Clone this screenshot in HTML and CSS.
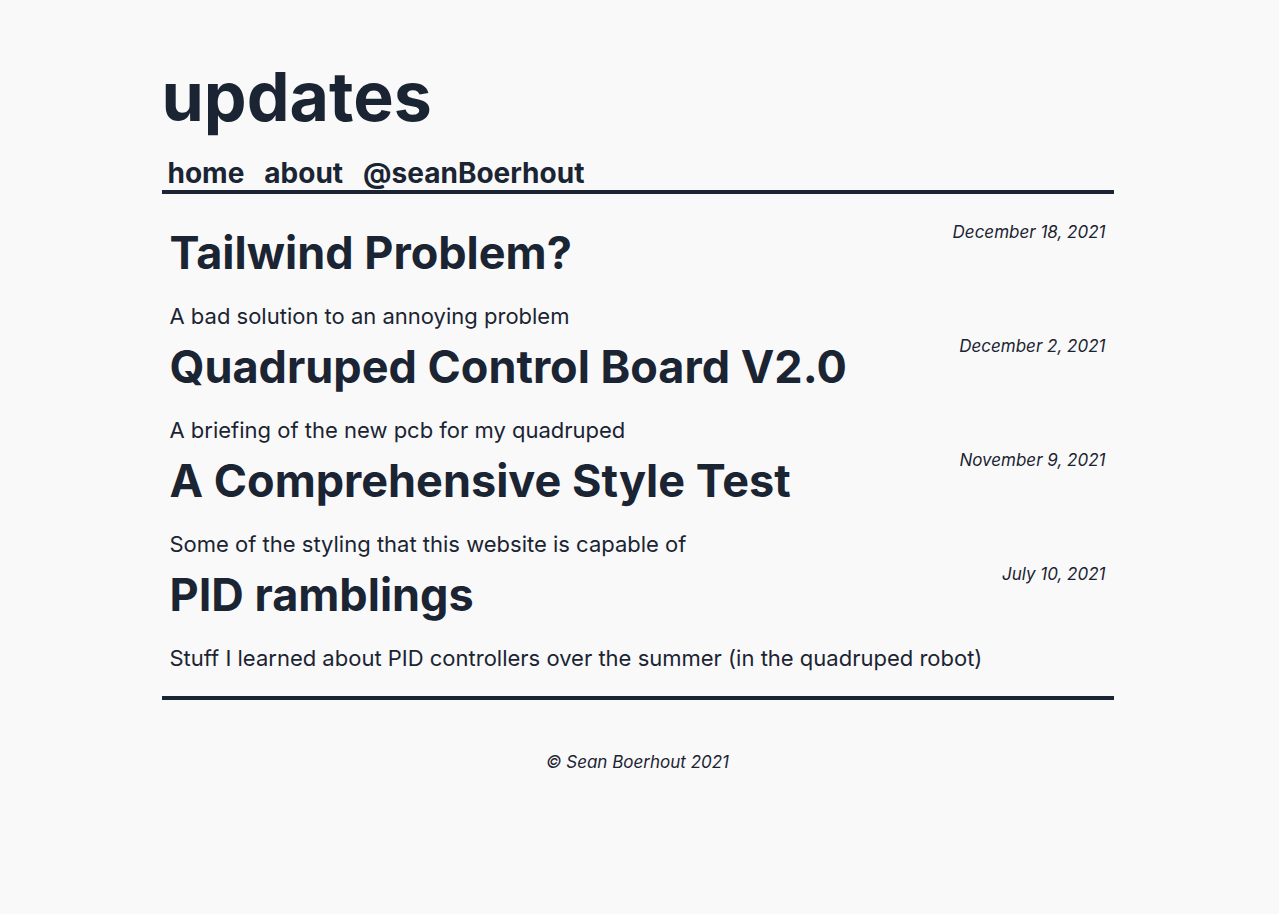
FILE: index.html
```html
<!DOCTYPE html>
<html lang="en">
<head>
<meta charset="utf-8">
<meta name="viewport" content="width=device-width, initial-scale=1">
<title>updates</title>
<link rel="stylesheet" href="styles.css">
</head>
<body>
<div class="page">
  <header class="header">
    <h1 class="title">updates</h1>
    <nav class="nav">
      <a href="#">home</a>
      <a href="#">about</a>
      <a href="#">@seanBoerhout</a>
    </nav>
  </header>
  <main class="posts">
    <article class="post">
      <div class="post-head">
        <h2 class="post-title"><a href="#">Tailwind Problem?</a></h2>
        <time class="date" datetime="2021-12-18">December 18, 2021</time>
      </div>
      <p class="summary">A bad solution to an annoying problem</p>
    </article>
    <article class="post">
      <div class="post-head">
        <h2 class="post-title"><a href="#">Quadruped Control Board V2.0</a></h2>
        <time class="date" datetime="2021-12-02">December 2, 2021</time>
      </div>
      <p class="summary">A briefing of the new pcb for my quadruped</p>
    </article>
    <article class="post">
      <div class="post-head">
        <h2 class="post-title"><a href="#">A Comprehensive Style Test</a></h2>
        <time class="date" datetime="2021-11-09">November 9, 2021</time>
      </div>
      <p class="summary">Some of the styling that this website is capable of</p>
    </article>
    <article class="post">
      <div class="post-head">
        <h2 class="post-title"><a href="#">PID ramblings</a></h2>
        <time class="date" datetime="2021-07-10">July 10, 2021</time>
      </div>
      <p class="summary">Stuff I learned about PID controllers over the summer (in the quadruped robot)</p>
    </article>
  </main>
  <footer class="footer">© Sean Boerhout 2021</footer>
</div>
</body>
</html>
```
FILE: styles.css
```css
* {
  box-sizing: border-box;
}

body {
  margin: 0;
  background: #f9f9f9;
  color: #1b2433;
  font-family: Inter, "Liberation Sans", sans-serif;
}

a {
  color: inherit;
  text-decoration: none;
}

.page {
  max-width: 1016px;
  margin: 0 auto;
  padding: 60px 34px 60px 30px;
}

.header {
  border-bottom: 4px solid;
}

.title {
  margin: 0 0 24px;
  font-size: 68px;
  line-height: 72px;
  font-weight: 700;
}

.nav {
  display: flex;
  gap: 20px;
  padding: 0 6px;
  font-size: 28px;
  line-height: 34px;
  font-weight: 700;
}

.posts {
  padding: 26px 8px 25px;
  border-bottom: 4px solid;
}

.post {
  padding-bottom: 5px;
}

.post:last-child {
  padding-bottom: 0;
}

.post-head {
  display: flex;
  justify-content: space-between;
  align-items: flex-start;
}

.post-title {
  margin: 0 0 17px;
  font-size: 45px;
  line-height: 66px;
  font-weight: 700;
}

.date,
.footer {
  font-size: 17px;
  line-height: 24px;
  font-style: italic;
}

.summary {
  margin: 0;
  font-size: 22px;
  line-height: 26px;
}

.footer {
  margin-top: 50px;
  text-align: center;
}
```
